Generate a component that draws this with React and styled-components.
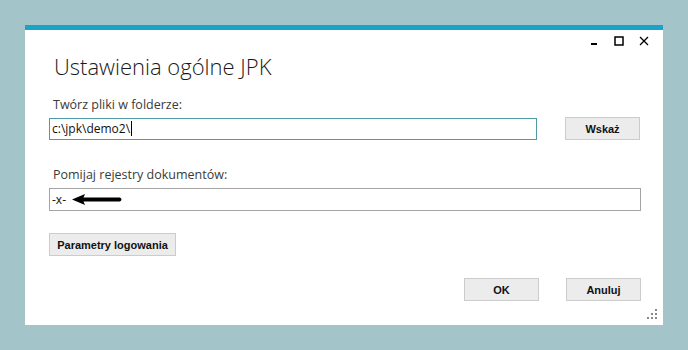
import React from "react";
import styled, { createGlobalStyle } from "styled-components";

const Global = createGlobalStyle`
  html, body {
    margin: 0;
    padding: 0;
    background: #a3c4c8;
  }
`;

const Page = styled.div`
  width: 688px;
  height: 350px;
  box-sizing: border-box;
  padding: 25px;
  background: #a3c4c8;
  font-family: "Open Sans", "Noto Sans", sans-serif;
`;

const Window = styled.div`
  width: 638px;
  height: 300px;
  box-sizing: border-box;
  background: #ffffff;
  border-top: 5px solid #1aa3c9;
  display: flex;
  flex-direction: column;
  position: relative;
`;

const TitleBar = styled.div`
  display: flex;
  justify-content: flex-end;
  align-items: center;
  gap: 15px;
  height: 12px;
  padding: 5px 14px 0 0;
`;

const Title = styled.h1`
  margin: 4px 0 0 29px;
  font-family: "Open Sans", "Noto Sans", sans-serif;
  font-weight: 300;
  font-size: 22px;
  line-height: 30px;
  color: #1a1a1a;
`;

const Content = styled.div`
  display: flex;
  flex-direction: column;
  padding: 0 22px 0 24px;
`;

const Label = styled.div`
  margin: ${(p) => p.$top}px 0 0 4px;
  font-size: 12.5px;
  line-height: 18px;
  color: #3a3a3a;
`;

const Row = styled.div`
  display: flex;
  align-items: center;
  justify-content: ${(p) => p.$justify || "flex-start"};
  gap: ${(p) => p.$gap || 0}px;
  margin-top: ${(p) => p.$top || 0}px;
`;

const Field = styled.div`
  flex: ${(p) => (p.$width ? "none" : "1")};
  width: ${(p) => (p.$width ? `${p.$width}px` : "auto")};
  height: ${(p) => p.$height}px;
  box-sizing: border-box;
  border: 1px solid ${(p) => (p.$focused ? "#4f9aa6" : "#a4a4a4")};
  display: flex;
  align-items: center;
  padding-left: 2px;
  font-size: 12px;
  color: #111;
`;

const Caret = styled.span`
  display: inline-block;
  width: 1px;
  height: 15px;
  margin-left: 1px;
  background: #000;
`;

const Button = styled.button`
  width: ${(p) => p.$width}px;
  height: 23px;
  box-sizing: border-box;
  border: 1px solid #cccccc;
  background: #ececec;
  font-family: "Liberation Sans", Arial, sans-serif;
  font-weight: bold;
  font-size: 11px;
  color: #111;
  padding: 0;
  margin: 0;
`;

const ControlBtn = styled.span`
  display: flex;
  align-items: center;
  justify-content: center;
  width: 10px;
  height: 10px;
`;

const Grip = styled.svg`
  position: absolute;
  right: 4px;
  bottom: 4px;
`;

function Arrow() {
  return (
    <svg width="52" height="11" viewBox="0 0 52 11" style={{ marginLeft: 6 }}>
      <path d="M0 5.5 L13 0 L11.5 3.5 L48 3.5 Q51 5.5 48 7.5 L11.5 7.5 L13 11 Z" fill="#000" />
    </svg>
  );
}

export default function App() {
  return (
    <>
      <Global />
      <Page>
        <Window>
          <TitleBar>
            <ControlBtn>
              <svg width="8" height="10" viewBox="0 0 8 10">
                <rect x="1" y="7" width="6" height="2" fill="#000" />
              </svg>
            </ControlBtn>
            <ControlBtn>
              <svg width="10" height="10" viewBox="0 0 10 10">
                <rect x="1" y="1" width="8" height="8" fill="none" stroke="#000" strokeWidth="1.5" />
              </svg>
            </ControlBtn>
            <ControlBtn>
              <svg width="10" height="10" viewBox="0 0 10 10">
                <path d="M1 1 L9 9 M9 1 L1 9" stroke="#000" strokeWidth="1.3" />
              </svg>
            </ControlBtn>
          </TitleBar>
          <Title>Ustawienia ogólne JPK</Title>
          <Content>
            <Label $top={15}>Twórz pliki w folderze:</Label>
            <Row $gap={28} $top={3}>
              <Field $width={488} $height={22} $focused>
                c:\jpk\demo2\<Caret />
              </Field>
              <Button $width={75}>Wskaż</Button>
            </Row>
            <Label $top={26}>Pomijaj rejestry dokumentów:</Label>
            <Row $top={4}>
              <Field $height={23}>
                -x-
                <Arrow />
              </Field>
            </Row>
            <Row $top={22}>
              <Button $width={127}>Parametry logowania</Button>
            </Row>
            <Row $justify="flex-end" $gap={27} $top={22}>
              <Button $width={75}>OK</Button>
              <Button $width={75}>Anuluj</Button>
            </Row>
          </Content>
          <Grip width="12" height="12" viewBox="0 0 12 12">
            <rect x="8" y="0" width="2" height="2" fill="#8a8a8a" />
            <rect x="4" y="4" width="2" height="2" fill="#8a8a8a" />
            <rect x="8" y="4" width="2" height="2" fill="#8a8a8a" />
            <rect x="0" y="8" width="2" height="2" fill="#8a8a8a" />
            <rect x="4" y="8" width="2" height="2" fill="#8a8a8a" />
            <rect x="8" y="8" width="2" height="2" fill="#8a8a8a" />
          </Grip>
        </Window>
      </Page>
    </>
  );
}
